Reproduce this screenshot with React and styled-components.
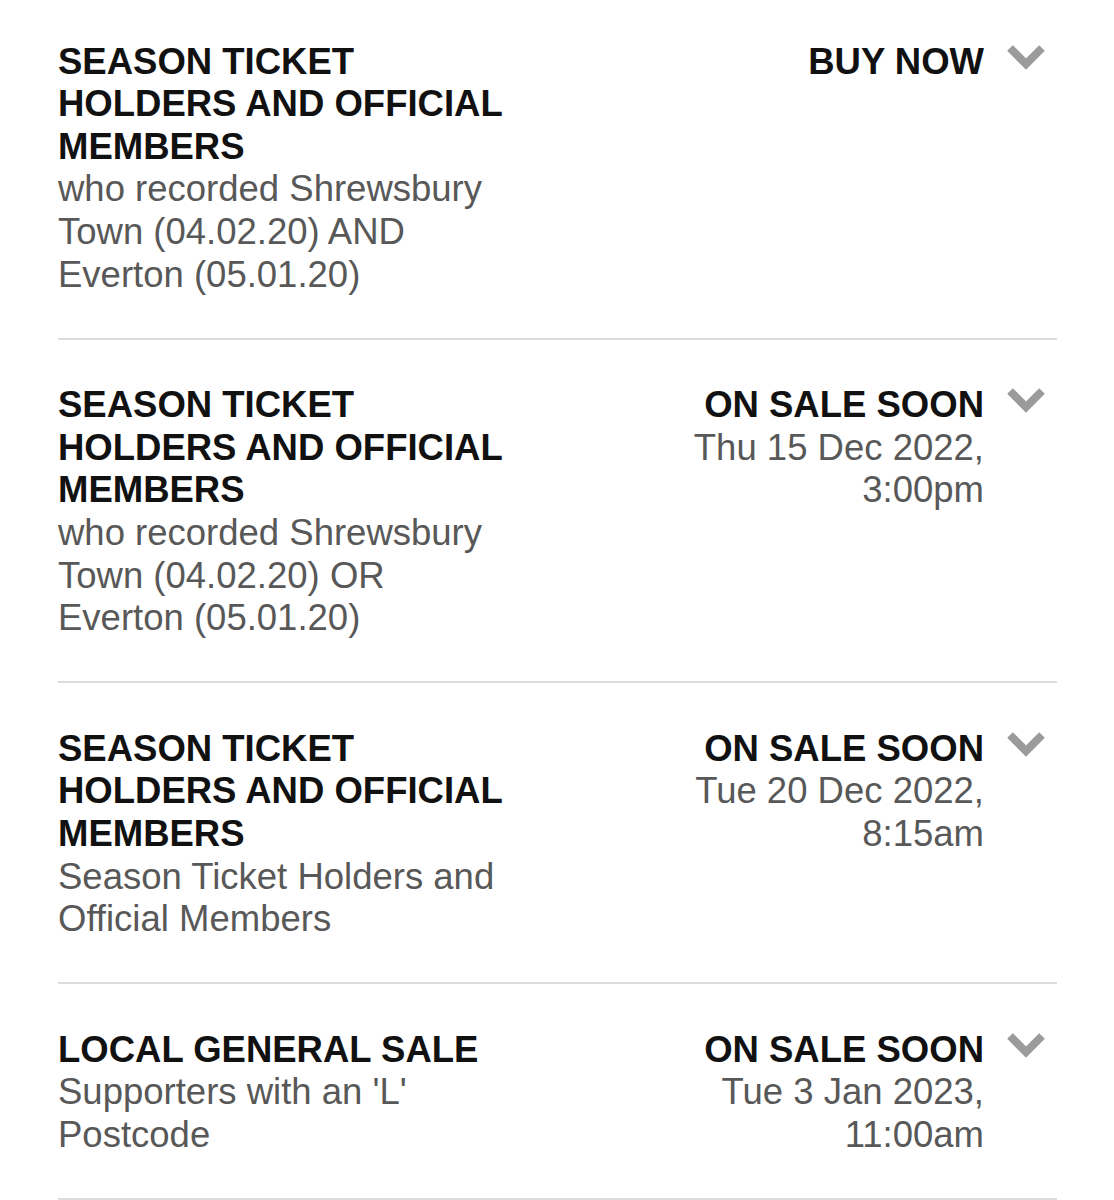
import React from "react";
import styled, { createGlobalStyle } from "styled-components";

const Global = createGlobalStyle`
  html, body { margin: 0; padding: 0; background: #fff; }
  body { font-family: "Liberation Sans", Arial, Helvetica, sans-serif; -webkit-font-smoothing: antialiased; }
`;

const List = styled.div`
  width: 999px;
  padding-left: 58px;
`;

const Row = styled.div`
  display: flex;
  align-items: flex-start;
  padding: 44.3px 0 41.7px;
  border-bottom: 2px solid #dcdcdc;
  &:first-child { padding-top: 40.7px; }
`;

const Left = styled.div`
  width: 462px;
  flex: none;
`;

const Title = styled.div`
  font-size: 36.5px;
  line-height: 42.6px;
  font-weight: 700;
  color: #111;
  text-transform: uppercase;
`;

const Sub = styled.div`
  font-size: 36.5px;
  line-height: 42.6px;
  color: #585858;
`;

const Right = styled.div`
  flex: 1;
  display: flex;
  justify-content: flex-end;
  align-items: flex-start;
  padding-right: 12px;
`;

const Status = styled.div`
  text-align: right;
  font-size: 36.5px;
  line-height: 42.6px;
`;

const StatusLabel = styled.div`
  font-weight: 700;
  color: #111;
`;

const DateLine = styled.div`
  color: #585858;
`;

const Chevron = styled.svg`
  width: 38px;
  height: 28px;
  margin-left: 23px;
  margin-top: 4px;
  flex: none;
`;

const rows = [
  {
    title: "Season Ticket Holders and Official Members",
    sub: "who recorded Shrewsbury Town (04.02.20) AND Everton (05.01.20)",
    status: "BUY NOW",
    date: [],
  },
  {
    title: "Season Ticket Holders and Official Members",
    sub: "who recorded Shrewsbury Town (04.02.20) OR Everton (05.01.20)",
    status: "ON SALE SOON",
    date: ["Thu 15 Dec 2022,", "3:00pm"],
  },
  {
    title: "Season Ticket Holders and Official Members",
    sub: "Season Ticket Holders and Official Members",
    status: "ON SALE SOON",
    date: ["Tue 20 Dec 2022,", "8:15am"],
  },
  {
    title: "Local General Sale",
    sub: "Supporters with an 'L' Postcode",
    status: "ON SALE SOON",
    date: ["Tue 3 Jan 2023,", "11:00am"],
  },
];

export default function App() {
  return (
    <>
      <Global />
      <List>
        {rows.map((r, i) => (
          <Row key={i}>
            <Left>
              <Title>{r.title}</Title>
              <Sub>{r.sub}</Sub>
            </Left>
            <Right>
              <Status>
                <StatusLabel>{r.status}</StatusLabel>
                {r.date.map((d, j) => (
                  <DateLine key={j}>{d}</DateLine>
                ))}
              </Status>
              <Chevron viewBox="0 0 38 28">
                <polyline
                  points="3,3 19,19 35,3"
                  fill="none"
                  stroke="#9b9b9b"
                  strokeWidth="8"
                  strokeLinecap="butt"
                  strokeLinejoin="miter"
                />
              </Chevron>
            </Right>
          </Row>
        ))}
      </List>
    </>
  );
}
